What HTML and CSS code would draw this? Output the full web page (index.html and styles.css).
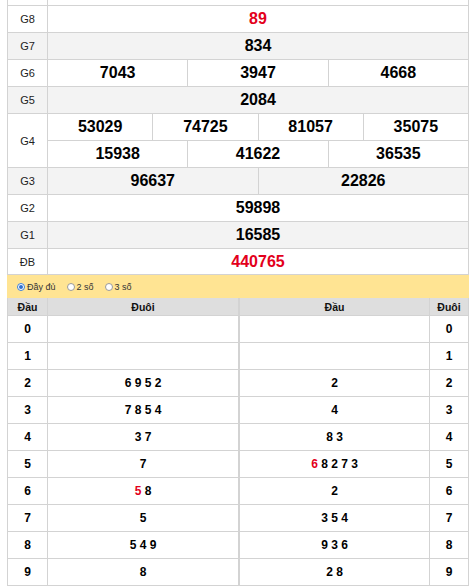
FILE: index.html
```html
<!DOCTYPE html>
<html lang="vi">
<head>
<meta charset="utf-8">
<title>Kết quả xổ số</title>
<link rel="stylesheet" href="styles.css">
</head>
<body>
<div class="page">
  <div class="kq">
    <div class="lbl cut"></div><div class="v s12 cut"></div>
    <div class="lbl">G8</div><div class="v s12 red">89</div>
    <div class="lbl alt">G7</div><div class="v s12 alt">834</div>
    <div class="lbl">G6</div><div class="v s4">7043</div><div class="v s4">3947</div><div class="v s4">4668</div>
    <div class="lbl alt">G5</div><div class="v s12 alt">2084</div>
    <div class="lbl r2">G4</div><div class="v s3">53029</div><div class="v s3">74725</div><div class="v s3">81057</div><div class="v s3">35075</div>
    <div class="v s4">15938</div><div class="v s4">41622</div><div class="v s4">36535</div>
    <div class="lbl alt">G3</div><div class="v s6 alt">96637</div><div class="v s6 alt">22826</div>
    <div class="lbl">G2</div><div class="v s12">59898</div>
    <div class="lbl alt">G1</div><div class="v s12 alt">16585</div>
    <div class="lbl">ĐB</div><div class="v s12 red">440765</div>
  </div>

  <div class="opts">
    <label class="opt"><span class="radio on"></span><span>Đầy đủ</span></label>
    <label class="opt"><span class="radio"></span><span>2 số</span></label>
    <label class="opt"><span class="radio"></span><span>3 số</span></label>
  </div>

  <div class="lt">
    <div class="lt-tbl lt-left">
      <div class="hd">Đầu</div><div class="hd">Đuôi</div>
      <div class="c">0</div><div class="c"></div>
      <div class="c">1</div><div class="c"></div>
      <div class="c">2</div><div class="c">6 9 5 2</div>
      <div class="c">3</div><div class="c">7 8 5 4</div>
      <div class="c">4</div><div class="c">3 7</div>
      <div class="c">5</div><div class="c">7</div>
      <div class="c">6</div><div class="c"><span class="red">5</span> 8</div>
      <div class="c">7</div><div class="c">5</div>
      <div class="c">8</div><div class="c">5 4 9</div>
      <div class="c">9</div><div class="c">8</div>
    </div>
    <div class="lt-tbl lt-right">
      <div class="hd">Đầu</div><div class="hd">Đuôi</div>
      <div class="c"></div><div class="c">0</div>
      <div class="c"></div><div class="c">1</div>
      <div class="c">2</div><div class="c">2</div>
      <div class="c">4</div><div class="c">3</div>
      <div class="c">8 3</div><div class="c">4</div>
      <div class="c"><span class="red">6</span> 8 2 7 3</div><div class="c">5</div>
      <div class="c">2</div><div class="c">6</div>
      <div class="c">3 5 4</div><div class="c">7</div>
      <div class="c">9 3 6</div><div class="c">8</div>
      <div class="c">2 8</div><div class="c">9</div>
    </div>
  </div>
</div>
</body>
</html>
```

FILE: styles.css
```css
html, body {
  margin: 0;
  padding: 0;
  background: #fff;
}

body {
  font-family: "Liberation Sans", Arial, sans-serif;
  color: #000;
}

.page {
  width: 462px;
  margin-left: 7px;
}

/* result table */
.kq {
  display: grid;
  grid-template-columns: 39px repeat(12, 1fr);
  grid-template-rows: 5px repeat(9, 26px) 25px;
  gap: 1px;
  padding: 0 1px 1px;
  background: #d3d3d3;
}

.kq > div {
  background: #fff;
  display: flex;
  align-items: center;
  justify-content: center;
}

.kq .alt {
  background: #f3f3f3;
}

.lbl {
  grid-column: 1;
  font-size: 11px;
  color: #222;
}

.lbl.r2 {
  grid-row: span 2;
}

.v {
  font-size: 16px;
  font-weight: bold;
}

.s12 { grid-column: span 12; }
.s6 { grid-column: span 6; }
.s4 { grid-column: span 4; }
.s3 { grid-column: span 3; }

.red {
  color: #e3001b;
}

/* options bar */
.opts {
  height: 23px;
  background: #ffe493;
  display: flex;
  align-items: center;
  padding-left: 10px;
  gap: 11px;
  font-size: 9px;
  color: #333;
}

.opt {
  display: flex;
  align-items: center;
  gap: 2px;
}

.radio {
  width: 6px;
  height: 6px;
  border: 1px solid #9a9a9a;
  border-radius: 50%;
  background: #fff;
  position: relative;
}

.radio.on {
  border-color: #3b7fd6;
}

.radio.on::after {
  content: "";
  position: absolute;
  left: 1px;
  top: 1px;
  width: 4px;
  height: 4px;
  border-radius: 50%;
  background: #2f6fd0;
}

/* loto tables */
.lt {
  display: flex;
}

.lt-tbl {
  display: grid;
  grid-template-rows: 17px repeat(10, 26px);
  gap: 1px;
  padding: 0 1px 1px;
  background: #d3d3d3;
}

.lt-left {
  width: 232px;
  grid-template-columns: 39px 1fr;
}

.lt-right {
  width: 230px;
  grid-template-columns: 1fr 38px;
}

.lt-tbl > div {
  display: flex;
  align-items: center;
  justify-content: center;
  background: #fff;
  font-size: 12px;
  font-weight: bold;
  white-space: pre;
}

.lt-tbl > .hd {
  background: #dedede;
  font-size: 10.5px;
  color: #111;
}
```
